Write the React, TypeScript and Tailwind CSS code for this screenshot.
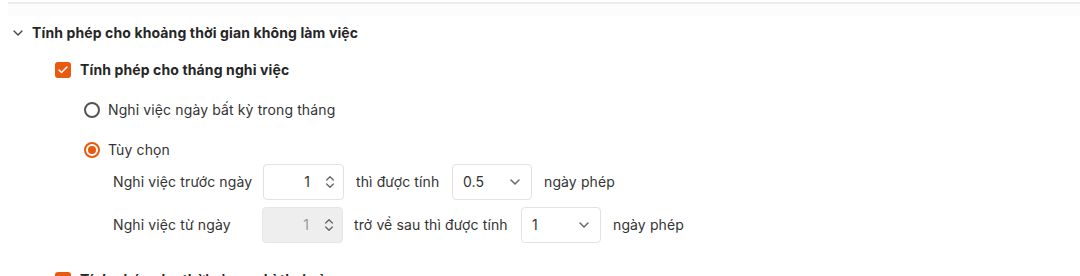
import { ChevronDown, ChevronsUpDown, Check } from 'lucide-react'

const font = { fontFamily: 'Inter, "Noto Sans", sans-serif' }

function Checkbox() {
  return (
    <span className="flex h-4 w-4 items-center justify-center rounded-[3px] bg-[#e9590f]">
      <Check size={12} strokeWidth={3} className="text-white" />
    </span>
  )
}

function Radio({ checked }: { checked?: boolean }) {
  if (checked) {
    return (
      <span className="flex h-4 w-4 items-center justify-center rounded-full border-2 border-[#e9590f]">
        <span className="h-2 w-2 rounded-full bg-[#e9590f]" />
      </span>
    )
  }
  return <span className="h-4 w-4 rounded-full border-2 border-[#555]" />
}

function NumberInput({ value, disabled }: { value: string; disabled?: boolean }) {
  return (
    <div
      className={
        disabled
          ? 'flex h-[36px] w-[81px] items-center rounded-[4px] border border-[#e6e6e6] bg-[#eeeeee] pr-[5px] text-[#999]'
          : 'flex h-[36px] w-[81px] items-center rounded-[4px] border border-[#e2e2e2] bg-white pr-[5px] text-[#333]'
      }
    >
      <span className="flex-1 text-right">{value}</span>
      <ChevronsUpDown size={16} strokeWidth={2} className="ml-[12px] text-[#666]" />
    </div>
  )
}

function Select({ value }: { value: string }) {
  return (
    <div className="flex h-[36px] w-[80px] items-center justify-between rounded-[4px] border border-[#e2e2e2] bg-white pl-[10px] pr-[8px] text-[#333]">
      <span>{value}</span>
      <ChevronDown size={16} strokeWidth={2.2} className="text-[#666]" />
    </div>
  )
}

export default function App() {
  return (
    <div className="h-[276px] w-[1080px] overflow-hidden bg-white text-sm tracking-[0.12px] text-[#333]" style={font}>
      <div className="ml-[8px] mt-[2px] h-[2px] bg-[#ececec]" />
      <div className="ml-[8px] h-[12px] bg-[#fcfcfc]" />

      <div className="mt-[7px] flex h-5 items-center pl-[10px]">
        <ChevronDown size={16} strokeWidth={2} className="text-[#444]" />
        <span className="ml-[6px] font-bold text-[#262626]">Tính phép cho khoảng thời gian không làm việc</span>
      </div>

      <div className="mt-[17px] flex h-5 items-center pl-[55px]">
        <Checkbox />
        <span className="ml-[9px] font-bold text-[#262626]">Tính phép cho tháng nghỉ việc</span>
      </div>

      <div className="mt-[20px] flex h-5 items-center pl-[84px]">
        <Radio />
        <span className="ml-[8px]">Nghỉ việc ngày bất kỳ trong tháng</span>
      </div>

      <div className="mt-[20px] flex h-5 items-center pl-[84px]">
        <Radio checked />
        <span className="ml-[8px]">Tùy chọn</span>
      </div>

      <div className="mt-[4px] flex items-center pl-[113px]">
        <span className="w-[150px]">Nghỉ việc trước ngày</span>
        <NumberInput value="1" />
        <span className="ml-[12px] w-[96px]">thì được tính</span>
        <Select value="0.5" />
        <span className="ml-[12px]">ngày phép</span>
      </div>

      <div className="mt-[7px] flex items-center pl-[113px]">
        <span className="w-[149px]">Nghỉ việc từ ngày</span>
        <NumberInput value="1" disabled />
        <span className="ml-[11px] w-[167px]">trở về sau thì được tính</span>
        <Select value="1" />
        <span className="ml-[12px]">ngày phép</span>
      </div>

      <div className="mt-[27px] flex h-5 items-center pl-[55px]">
        <Checkbox />
        <span className="ml-[9px] font-bold text-[#262626]">Tính phép cho thời gian nghỉ thai sản</span>
      </div>
    </div>
  )
}
